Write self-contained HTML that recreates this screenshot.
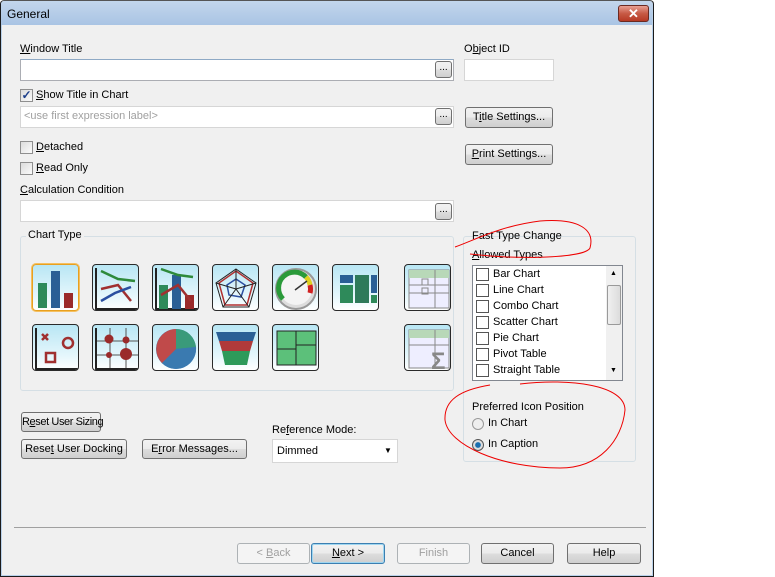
<!DOCTYPE html>
<html><head><meta charset="utf-8"><style>
*{box-sizing:border-box;margin:0;padding:0}
body{width:775px;height:577px;background:#fff;position:relative;overflow:hidden;font-family:"Liberation Sans",sans-serif;font-size:11px;color:#000;white-space:nowrap}
.a{position:absolute}
.win{left:0;top:0;width:654px;height:577px;background:#f0f0f0;border:1px solid #1b1b1b;border-top-color:#555;border-radius:4px 4px 0 0;box-shadow:inset 0 0 0 1px #b9d1ea}
.tb{left:1px;top:1px;width:651px;height:24px;background:linear-gradient(#c3d6ec,#a9c4e4);border-radius:3px 3px 0 0}
.inp{background:#fff;border:1px solid #abadb3;border-top-color:#8ea9c5}
.btn{border:1px solid #707070;border-radius:3px;background:linear-gradient(#f2f2f2 0,#ebebeb 50%,#dddddd 51%,#cfcfcf 100%);text-align:center;line-height:18px}
.dis{border-color:#adb2b5;background:#f4f4f4;color:#a0a0a0}
.dots{width:17px;height:17px;line-height:12px;font-size:10px}
.cb{width:13px;height:13px;border:1px solid #8f8f8f;background:linear-gradient(135deg,#dcdcdc,#fbfbfb)}
.lb{width:13px;height:13px;border:1px solid #555;background:#fff}
.grp{border:1px solid #d5dfe5;border-radius:3px}
.ic{width:47px;height:47px;border:1px solid #2a2a2a;border-radius:4px;background:linear-gradient(#b8e6f4,#e6f7fc 70%,#fff);overflow:hidden}
u{text-decoration:underline}
</style></head><body>
<div class="a win"></div>
<div class="a tb"></div>
<div class="a" style="left:7px;top:7px;font-size:12px">General</div>
<div class="a" style="left:618px;top:5px;width:31px;height:17px;border:1px solid #6b2a22;border-radius:3px;background:linear-gradient(#e8a093,#c75a45 50%,#b63a25);color:#fff;font-weight:bold;text-align:center;line-height:15px;font-size:13px">✕</div>

<div class="a" style="left:20px;top:43px"><u>W</u>indow Title</div>
<div class="a inp" style="left:20px;top:59px;width:434px;height:22px"></div>
<div class="a btn dots" style="left:435px;top:61px">...</div>
<div class="a" style="left:464px;top:43px">O<u>b</u>ject ID</div>
<div class="a inp" style="left:464px;top:59px;width:90px;height:22px;border-color:#d6d6d6"></div>

<div class="a cb" style="left:20px;top:89px;color:#1c3e8a;font-size:12px;line-height:10px;text-align:center;font-weight:bold">✓</div>
<div class="a" style="left:36px;top:89px"><u>S</u>how Title in Chart</div>
<div class="a inp" style="left:20px;top:106px;width:434px;height:22px;border-color:#d6d6d6"></div>
<div class="a" style="left:24px;top:110px;color:#a0a0a0">&lt;use first expression label&gt;</div>
<div class="a btn dots" style="left:435px;top:108px">...</div>
<div class="a btn" style="left:465px;top:107px;width:88px;height:21px">T<u>i</u>tle Settings...</div>

<div class="a cb" style="left:20px;top:141px"></div>
<div class="a" style="left:36px;top:141px"><u>D</u>etached</div>
<div class="a cb" style="left:20px;top:162px"></div>
<div class="a" style="left:36px;top:162px"><u>R</u>ead Only</div>
<div class="a btn" style="left:465px;top:144px;width:88px;height:21px"><u>P</u>rint Settings...</div>

<div class="a" style="left:20px;top:184px"><u>C</u>alculation Condition</div>
<div class="a inp" style="left:20px;top:200px;width:434px;height:22px;border-color:#d6d6d6"></div>
<div class="a btn dots" style="left:435px;top:203px">...</div>

<div class="a grp" style="left:20px;top:236px;width:434px;height:155px"></div>
<div class="a" style="left:26px;top:229px;background:#f0f0f0;padding:0 2px">Chart Type</div>

<div class="a ic" style="left:32px;top:264px;border-color:#e8a020;box-shadow:0 0 0 1px #f5c060"><svg width="47" height="47"><rect x="5" y="18" width="9" height="25" fill="#2e8a5a"/><rect x="18" y="6" width="9" height="37" fill="#2a5f95"/><rect x="31" y="28" width="9" height="15" fill="#9a2a2a"/></svg></div>
<div class="a ic" style="left:92px;top:264px"><svg width="47" height="47"><path d="M3 3V44H45" stroke="#222" stroke-width="2" fill="none"/><path d="M8 6L25 14L42 16" stroke="#2e8a3a" stroke-width="2.5" fill="none"/><path d="M8 24L25 20L38 36" stroke="#a03030" stroke-width="2.5" fill="none"/><path d="M8 36L22 28L38 22" stroke="#2a4fa0" stroke-width="2.5" fill="none"/></svg></div>
<div class="a ic" style="left:152px;top:264px"><svg width="47" height="47"><path d="M3 3V44H45" stroke="#222" stroke-width="2" fill="none"/><rect x="6" y="20" width="9" height="24" fill="#2e8a5a"/><rect x="19" y="10" width="9" height="34" fill="#2a5f95"/><rect x="32" y="30" width="9" height="14" fill="#9a2a2a"/><path d="M8 4L25 10L40 12" stroke="#2e8a3a" stroke-width="2.5" fill="none"/><path d="M8 30L25 20L38 36" stroke="#a03030" stroke-width="2.5" fill="none"/></svg></div>
<div class="a ic" style="left:212px;top:264px"><svg width="47" height="47"><polygon points="23,4 43,18 36,42 10,42 3,18" fill="none" stroke="#222"/><polygon points="23,6 40,18 34,40 12,40 6,18" fill="none" stroke="#b03030" stroke-width="1.5"/><polygon points="23,14 32,20 28,32 16,30 14,20" fill="none" stroke="#2a4fa0" stroke-width="1.5"/><path d="M23 4L23 24M43 18L23 24M36 42L23 24M10 42L23 24M3 18L23 24" stroke="#222"/></svg></div>
<div class="a ic" style="left:272px;top:264px"><svg width="47" height="47"><circle cx="23" cy="24" r="20" fill="#ddd" stroke="#999" stroke-width="2"/><circle cx="23" cy="24" r="16" fill="#f4f4f4"/><path d="M10 34A15 15 0 0 1 33 12" stroke="#2a9a3a" stroke-width="5" fill="none"/><path d="M33 12A15 15 0 0 1 37 20" stroke="#e0d020" stroke-width="5" fill="none"/><path d="M37 20A15 15 0 0 1 37 28" stroke="#d02020" stroke-width="5" fill="none"/><path d="M22 25L34 16" stroke="#333" stroke-width="1.5"/></svg></div>
<div class="a ic" style="left:332px;top:264px"><svg width="47" height="47"><rect x="7" y="10" width="13" height="8" fill="#2a5f95"/><rect x="7" y="20" width="13" height="18" fill="#2e8a5a"/><rect x="22" y="10" width="14" height="28" fill="#2e7a5a"/><rect x="38" y="10" width="6" height="18" fill="#2a5f95"/><rect x="38" y="30" width="6" height="8" fill="#2e8a5a"/></svg></div>
<div class="a ic" style="left:404px;top:264px"><svg width="47" height="47"><rect x="4" y="5" width="40" height="38" fill="#eef" stroke="#888"/><rect x="4" y="5" width="40" height="8" fill="#b8d8b8"/><path d="M30 5V43M4 20H44M4 28H44" stroke="#888"/><rect x="17" y="14" width="6" height="6" fill="none" stroke="#888"/><rect x="17" y="23" width="6" height="6" fill="none" stroke="#888"/></svg></div>
<div class="a ic" style="left:32px;top:324px"><svg width="47" height="47"><path d="M3 3V44H45" stroke="#222" stroke-width="2" fill="none"/><path d="M9 9L15 15M15 9L9 15" stroke="#a03030" stroke-width="2.5"/><circle cx="35" cy="18" r="5" fill="none" stroke="#a03030" stroke-width="2.5"/><rect x="13" y="28" width="9" height="9" fill="none" stroke="#a03030" stroke-width="2.5"/></svg></div>
<div class="a ic" style="left:92px;top:324px"><svg width="47" height="47"><path d="M3 3V44H45M3 16H45M3 30H45M17 3V47M33 3V47" stroke="#555" stroke-width="1" fill="none"/><path d="M3 3V44H45" stroke="#222" stroke-width="2" fill="none"/><circle cx="16" cy="14" r="4.5" fill="#9a2a2a"/><circle cx="33" cy="15" r="3.5" fill="#9a2a2a"/><circle cx="16" cy="30" r="3" fill="#9a2a2a"/><circle cx="33" cy="29" r="6" fill="#9a2a2a"/></svg></div>
<div class="a ic" style="left:152px;top:324px"><svg width="47" height="47"><circle cx="23" cy="24" r="20" fill="#3a7ab0"/><path d="M23 24L23 4A20 20 0 0 1 43 22Z" fill="#3a9a7a"/><path d="M23 24L43 22A20 20 0 0 1 9 38Z" fill="#3a7ab0"/><path d="M23 24L9 38A20 20 0 0 1 23 4Z" fill="#c04a4a"/></svg></div>
<div class="a ic" style="left:212px;top:324px"><svg width="47" height="47"><polygon points="3,7 43,7 40,16 6,16" fill="#2a5f95"/><polygon points="6,16 40,16 37,26 9,26" fill="#b03a3a"/><polygon points="9,26 37,26 34,40 12,40" fill="#2e9a5a"/></svg></div>
<div class="a ic" style="left:272px;top:324px"><svg width="47" height="47"><rect x="4" y="6" width="39" height="34" fill="#5cc07a" stroke="#222"/><path d="M23 6V40M4 24H23M23 20H43" stroke="#222"/></svg></div>
<div class="a ic" style="left:404px;top:324px"><svg width="47" height="47"><rect x="4" y="5" width="40" height="38" fill="#eef" stroke="#888"/><rect x="4" y="5" width="40" height="8" fill="#b8d8b8"/><path d="M30 5V43M4 20H44" stroke="#888"/><text x="26" y="44" font-size="24" font-weight="bold" fill="#888" font-family="Liberation Sans">Σ</text></svg></div>

<div class="a grp" style="left:463px;top:236px;width:173px;height:226px"></div>
<div class="a" style="left:472px;top:230px">Fast Type Change</div>
<div class="a" style="left:472px;top:249px"><u>A</u>llowed Types</div>
<div class="a" style="left:472px;top:265px;width:151px;height:116px;border:1px solid #828790;background:#fff"></div>
<div class="a" style="left:606px;top:266px;width:16px;height:114px;background:#f0f0f0"></div>
<div class="a" style="left:607px;top:285px;width:14px;height:40px;border:1px solid #9a9a9a;border-radius:2px;background:linear-gradient(90deg,#f0f0f0,#dcdcdc)"></div>
<div class="a" style="left:610px;top:270px;font-size:7px">▲</div>
<div class="a" style="left:610px;top:367px;font-size:7px">▼</div>
<div class="a lb" style="left:476px;top:268px"></div><div class="a" style="left:493px;top:268px">Bar Chart</div>
<div class="a lb" style="left:476px;top:284px"></div><div class="a" style="left:493px;top:284px">Line Chart</div>
<div class="a lb" style="left:476px;top:300px"></div><div class="a" style="left:493px;top:300px">Combo Chart</div>
<div class="a lb" style="left:476px;top:316px"></div><div class="a" style="left:493px;top:316px">Scatter Chart</div>
<div class="a lb" style="left:476px;top:332px"></div><div class="a" style="left:493px;top:332px">Pie Chart</div>
<div class="a lb" style="left:476px;top:348px"></div><div class="a" style="left:493px;top:348px">Pivot Table</div>
<div class="a lb" style="left:476px;top:364px"></div><div class="a" style="left:493px;top:364px">Straight Table</div>
<div class="a" style="left:472px;top:401px">Preferred Icon Position</div>
<div class="a" style="left:472px;top:418px;width:12px;height:12px;border:1px solid #999;border-radius:50%;background:#eee"></div>
<div class="a" style="left:488px;top:417px">In Chart</div>
<div class="a" style="left:472px;top:439px;width:12px;height:12px;border:1px solid #555;border-radius:50%;background:radial-gradient(#1a6fb0 35%,#ddd 45%)"></div>
<div class="a" style="left:488px;top:438px">In Caption</div>

<div class="a btn" style="left:21px;top:412px;width:80px;height:20px;letter-spacing:-0.4px">R<u>e</u>set User Sizing</div>
<div class="a btn" style="left:21px;top:439px;width:106px;height:20px">Rese<u>t</u> User Docking</div>
<div class="a btn" style="left:142px;top:439px;width:105px;height:20px">E<u>r</u>ror Messages...</div>
<div class="a" style="left:272px;top:424px">Re<u>f</u>erence Mode:</div>
<div class="a inp" style="left:272px;top:439px;width:126px;height:24px;border-color:#d6d6d6"></div>
<div class="a" style="left:277px;top:445px">Dimmed</div>
<div class="a" style="left:384px;top:446px;font-size:8px">▼</div>

<div class="a" style="left:14px;top:527px;width:632px;height:1px;background:#a0a0a0"></div>
<div class="a btn dis" style="left:237px;top:543px;width:73px;height:21px">&lt; <u>B</u>ack</div>
<div class="a btn" style="left:311px;top:543px;width:74px;height:21px;border-color:#3c7fb1;box-shadow:inset 0 0 0 1px #9fd6f0"><u>N</u>ext &gt;</div>
<div class="a btn dis" style="left:397px;top:543px;width:73px;height:21px">Finish</div>
<div class="a btn" style="left:481px;top:543px;width:73px;height:21px">Cancel</div>
<div class="a btn" style="left:567px;top:543px;width:74px;height:21px">Help</div>

<svg class="a" style="left:0;top:0" width="775" height="577"><g fill="none" stroke="#e00" stroke-width="1"><path d="M455 247C475 240 500 226 540 221C580 218 595 230 590 248C585 258 520 260 470 254"/><path d="M520 384C570 378 625 385 625 410C622 440 600 468 560 468C500 468 448 445 445 420C444 400 460 390 490 385"/></g></svg>
</body></html>
